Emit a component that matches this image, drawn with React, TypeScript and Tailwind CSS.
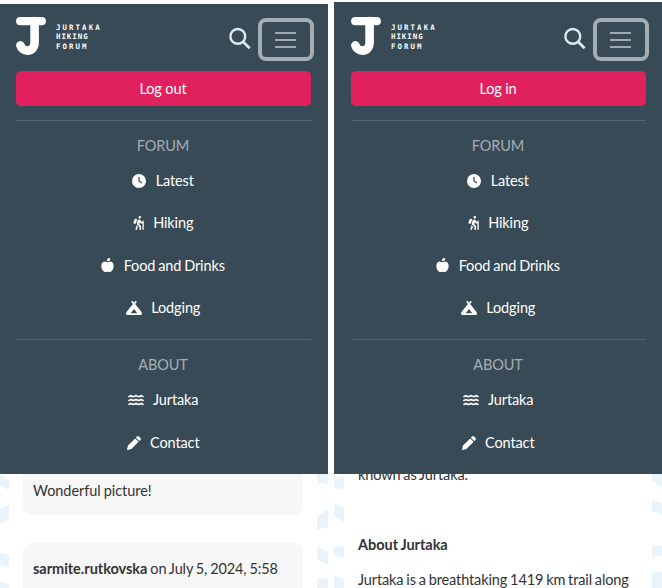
import type { ReactNode } from "react";
import { FaClock, FaPersonHiking, FaAppleWhole, FaCampground, FaWater } from "react-icons/fa6";

function Logo() {
  return (
    <div className="flex h-[40px] w-[100px]">
      <svg className="h-[40px] w-[32px] shrink-0" viewBox="0 0 32 40" fill="none" stroke="#fff" strokeLinecap="round" strokeLinejoin="round">
        <path d="M4.2 5.2H25.8" strokeWidth="8.2" />
        <path d="M18.6 5V26.5C18.6 31.2 15.8 34.6 11.4 34.6C8 34.6 5.2 32.4 4.4 29.4" strokeWidth="8.6" />
      </svg>
      <div className="ml-[8.5px] flex flex-col pt-[6.5px] font-['DejaVu_Sans_Mono',monospace] text-[7.4px] leading-[9.5px] font-bold text-white">
        <span className="tracking-[2.08px]">JURTAKA</span>
        <span className="tracking-[0.98px]">HIKING</span>
        <span className="tracking-[2.08px]">FORUM</span>
      </div>
    </div>
  );
}

function SearchIcon() {
  return (
    <svg className="mt-[23px] ml-auto size-[23px] shrink-0" viewBox="0 0 23 23" fill="none" stroke="#dfe7ef" strokeWidth="2.4">
      <circle cx="8.8" cy="9.4" r="7.4" />
      <path d="M14.1 14.7L20.6 21.2" strokeWidth="2.8" />
    </svg>
  );
}

function PencilIcon() {
  return (
    <svg className="size-[14px]" viewBox="0 0 14 14" fill="currentColor">
      <path d="M8.2 2.4L11.6 5.8L4.4 13L0.7 13.9Q0 14 0.1 13.3L1 9.6Z" />
      <path d="M8.9 1.7L10.1 0.5Q11 -0.3 11.9 0.5L13.5 2.1Q14.3 3 13.5 3.9L12.3 5.1Z" />
    </svg>
  );
}

function Row({ icon, label }: { icon: ReactNode; label: string }) {
  return (
    <a className="flex h-[42.2px] items-center justify-center gap-[9.5px] text-white">
      {icon}
      <span>{label}</span>
    </a>
  );
}

function Menu({ action, edge }: { action: string; edge: string }) {
  return (
    <nav className={`flex h-[474px] flex-col border-white bg-[#384a56] bg-clip-padding ${edge}`}>
      <header className="flex h-[67px] w-[298px] shrink-0 items-start">
        <div className="pt-[12px]"><Logo /></div>
        <SearchIcon />
        <button className="mt-[14px] ml-[6px] flex h-[43px] w-[56px] shrink-0 flex-col items-center justify-center gap-[5px] rounded-[8px] border-4 border-[#a4adb4]">
          <span className="h-[2px] w-[21px] bg-[#a0a9b0]" />
          <span className="h-[2px] w-[21px] bg-[#a0a9b0]" />
          <span className="h-[2px] w-[21px] bg-[#a0a9b0]" />
        </button>
      </header>
      <div className="flex w-[295px] flex-col">
        <button className="h-[35px] shrink-0 rounded-[5px] bg-[#e0215d] text-white">{action}</button>
        <div className="mt-[14px] h-px shrink-0 bg-[#566570]" />
        <div className="h-[39px] shrink-0 pt-[15px] text-center leading-[20px] text-[#a5aeb6]">FORUM</div>
        <Row icon={<FaClock className="size-[14px]" />} label="Latest" />
        <Row icon={<FaPersonHiking className="h-[14px] w-[11px]" />} label="Hiking" />
        <Row icon={<FaAppleWhole className="h-[14px] w-[13px]" />} label="Food and Drinks" />
        <Row icon={<FaCampground className="h-[14px] w-[16px]" />} label="Lodging" />
        <div className="mt-[10px] h-px shrink-0 bg-[#566570]" />
        <div className="h-[39px] shrink-0 pt-[15px] text-center leading-[20px] text-[#a5aeb6]">ABOUT</div>
        <Row icon={<FaWater className="h-[14px] w-[16px]" />} label="Jurtaka" />
        <div className="pt-[0.6px]">
          <Row icon={<PencilIcon />} label="Contact" />
        </div>
      </div>
    </nav>
  );
}

function Pattern({ shapes, width }: { shapes: string; width: number }) {
  return (
    <svg width={width} height="114" viewBox={`0 0 ${width} 114`} fill="#e8f4f9" className="shrink-0">
      <path d={shapes} />
    </svg>
  );
}

export default function App() {
  return (
    <main className="flex h-[588px] w-[662px] gap-[6px] overflow-hidden bg-white font-[Lato,sans-serif] text-[14.5px] tracking-[-0.12px] text-[#333] [word-spacing:-0.7px]">
      <section className="w-[328px] shrink-0">
        <Menu action="Log out" edge="border-t-4 pl-[15.5px]" />
        <div className="flex h-[114px] overflow-hidden">
          <Pattern width={9} shapes="M0 1L9 6V16L0 12ZM0 35L9 31V45L0 51ZM0 79L9 81V93L0 91ZM0 108L9 110V114H0Z" />
          <div className="ml-[14px] flex w-[280px] shrink-0 flex-col gap-[28px]">
            <div className="h-[41px] shrink-0 rounded-b-[9px] bg-[#f7f7f7] px-[10px] pt-[7px] leading-[20px] tracking-[-0.05px]">Wonderful picture!</div>
            <div className="h-[60px] shrink-0 rounded-t-[9px] bg-[#f7f7f7] px-[10px] pt-[16px] leading-[20px] whitespace-nowrap">
              <b className="tracking-[-0.03px]">sarmite.rutkovska</b> on July 5, 2024, 5:58
            </div>
          </div>
          <div className="ml-[14px]">
            <Pattern width={11} shapes="M0 0H11V11Q5 7 0 10ZM0 43L11 35V53L0 56ZM0 72L11 78V91L0 85ZM0 105Q5 103 11 105V114H0Z" />
          </div>
        </div>
      </section>
      <section className="w-[328px] shrink-0">
        <Menu action="Log in" edge="border-t-2 pt-[2px] pl-[16.5px]" />
        <div className="flex h-[114px] overflow-hidden">
          <Pattern width={10} shapes="M0 3Q5 5 10 2V14Q5 16 0 14ZM0 29L10 34V48L0 42ZM0 73L10 72V84L0 82ZM0 101L10 105V114H0Z" />
          <div className="ml-[14px] w-[294px] shrink-0 leading-[20px] whitespace-nowrap">
            <p className="mt-[-9px] h-[20px]">known as Jurtaka.</p>
            <h2 className="mt-[50px] font-bold tracking-[-0.03px]">About Jurtaka</h2>
            <p className="mt-[15px]">Jurtaka is a breathtaking 1419 km trail along</p>
          </div>
          <Pattern width={10} shapes="M0 0H10V13L0 7ZM0 26L10 29V41L0 37ZM0 73L10 71V82L0 83ZM0 98H10V114H0Z" />
        </div>
      </section>
    </main>
  );
}
